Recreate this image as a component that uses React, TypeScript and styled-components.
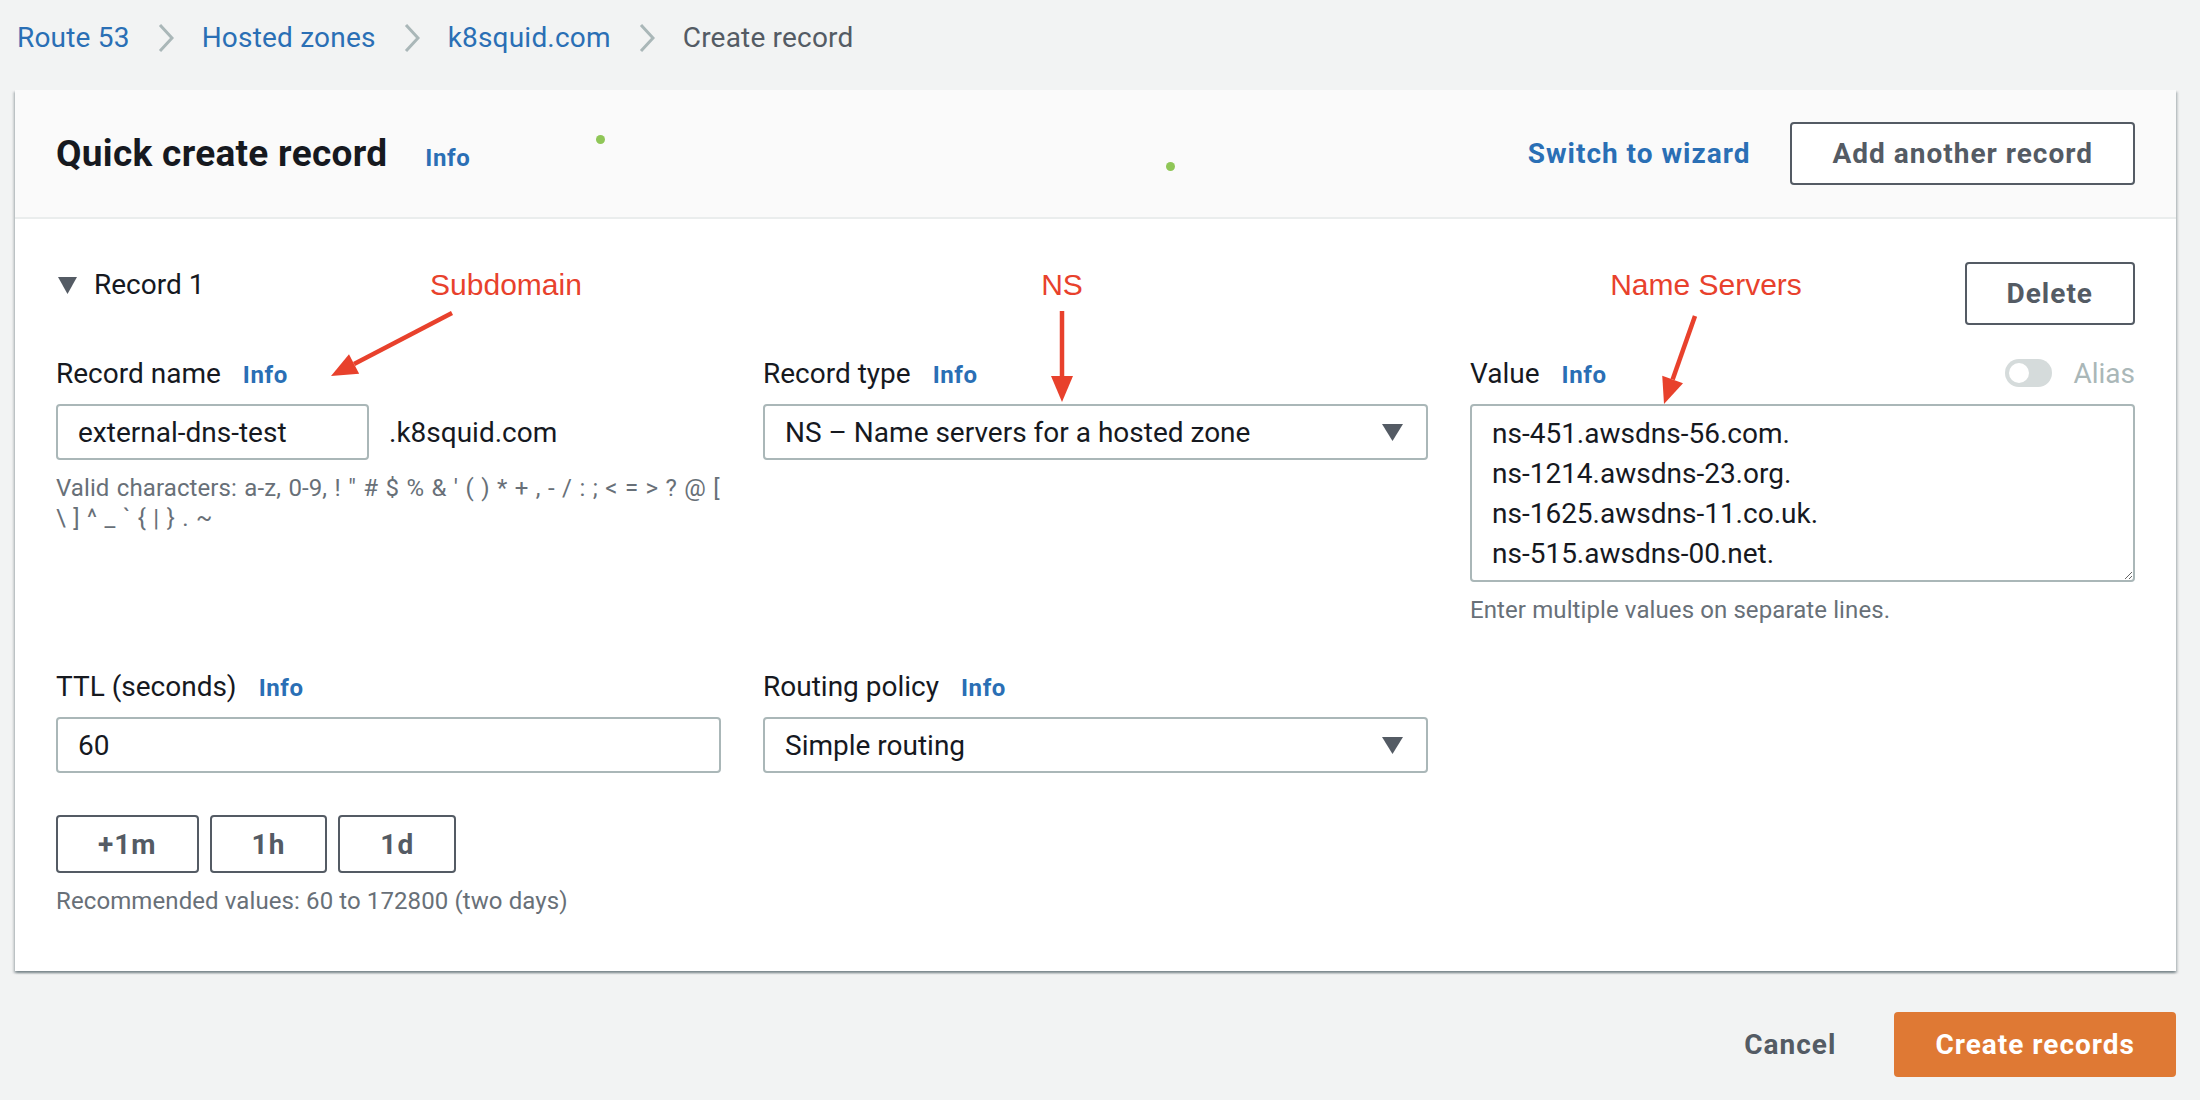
import React from "react";
import styled, { createGlobalStyle } from "styled-components";

const GlobalStyle = createGlobalStyle`
  html, body { margin: 0; padding: 0; }
  body {
    background: #f2f3f3;
    font-family: Roboto, "Noto Sans", Arial, sans-serif;
    color: #16191f;
  }
  * { box-sizing: border-box; }
`;

const BLUE = "#2a6fb5";
const GRAY = "#545b64";
const HINT = "#687078";
const RED = "#e8412c";

const Page = styled.div`
  padding: 0 24px 0 15px;
  width: 2200px;
`;

const Breadcrumbs = styled.nav`
  display: flex;
  align-items: center;
  gap: 28px;
  height: 40px;
  margin-top: 18px;
  margin-bottom: 32px;
  padding-left: 2px;
  font-size: 28px;
`;

const Crumb = styled.span<{ $current?: boolean }>`
  color: ${(p) => (p.$current ? GRAY : BLUE)};
  line-height: 40px;
  white-space: nowrap;
  letter-spacing: 0.2px;
`;

const Chevron = () => (
  <svg width="16" height="30" viewBox="0 0 16 30">
    <polyline points="2,2 14,15 2,28" fill="none" stroke="#aab7b8" strokeWidth="3" />
  </svg>
);

const Card = styled.section`
  position: relative;
  background: #fff;
  box-shadow: 0 2px 2px 0 rgba(0, 28, 36, 0.3), 2px 2px 2px 0 rgba(0, 28, 36, 0.15),
    -2px 2px 2px 0 rgba(0, 28, 36, 0.15);
`;

const CardHeader = styled.header`
  position: relative;
  display: flex;
  align-items: center;
  justify-content: space-between;
  height: 129px;
  padding: 0 41px;
  background: #fafafa;
  border-bottom: 2px solid #eaeded;
`;

const TitleGroup = styled.div`
  display: flex;
  align-items: baseline;
  gap: 38px;
`;

const Title = styled.h2`
  margin: 0;
  font-size: 37px;
  font-weight: 700;
  letter-spacing: 0.3px;
  color: #16191f;
`;

const InfoLink = styled.span`
  font-size: 24px;
  font-weight: 700;
  letter-spacing: 0.6px;
  color: ${BLUE};
`;

const HeaderActions = styled.div`
  display: flex;
  align-items: center;
  gap: 40px;
`;

const TextLink = styled.span<{ $tone?: "blue" | "gray" }>`
  font-size: 28px;
  font-weight: 700;
  letter-spacing: 1px;
  color: ${(p) => (p.$tone === "gray" ? GRAY : BLUE)};
  white-space: nowrap;
`;

const OutlineButton = styled.button<{ $h?: number }>`
  height: ${(p) => p.$h ?? 63}px;
  padding: 0 40px;
  border: 2px solid ${GRAY};
  border-radius: 4px;
  background: #fff;
  color: ${GRAY};
  font-family: inherit;
  font-size: 28px;
  font-weight: 700;
  letter-spacing: 1px;
  white-space: nowrap;
`;

const Dot = styled.span<{ $x: number; $y: number }>`
  position: absolute;
  left: ${(p) => p.$x}px;
  top: ${(p) => p.$y}px;
  width: 9px;
  height: 9px;
  border-radius: 50%;
  background: #8fc657;
`;

const CardBody = styled.div`
  padding: 43px 41px 55px;
`;

const RecordHeader = styled.div`
  display: flex;
  justify-content: space-between;
  align-items: flex-start;
  height: 63px;
`;

const RecordToggle = styled.div`
  display: flex;
  align-items: center;
  gap: 17px;
  margin-top: 5px;
  margin-left: 2px;
  font-size: 28px;
  line-height: 36px;
`;

const Grid = styled.div`
  display: grid;
  grid-template-columns: repeat(3, 1fr);
  column-gap: 42px;
  row-gap: 43px;
  margin-top: 30px;
`;

const Field = styled.div`
  display: flex;
  flex-direction: column;
`;

const LabelRow = styled.div`
  display: flex;
  align-items: center;
  justify-content: space-between;
  height: 36px;
  margin-bottom: 13px;
`;

const LabelGroup = styled.div`
  display: flex;
  align-items: baseline;
  gap: 22px;
`;

const Label = styled.span`
  font-size: 28px;
  color: #16191f;
`;

const InputRow = styled.div`
  display: flex;
  align-items: center;
  gap: 20px;
`;

const TextInput = styled.div<{ $w?: number }>`
  display: flex;
  align-items: center;
  width: ${(p) => (p.$w ? `${p.$w}px` : "100%")};
  height: 56px;
  padding: 0 20px;
  border: 2px solid #aab7b8;
  border-radius: 4px;
  background: #fff;
  font-size: 28px;
  color: #16191f;
  white-space: nowrap;
`;

const Suffix = styled.span`
  font-size: 28px;
  color: #16191f;
`;

const Hint = styled.div<{ $spread?: boolean }>`
  margin-top: 13px;
  font-size: 24px;
  line-height: 30px;
  color: ${HINT};
  word-spacing: ${(p) => (p.$spread ? "1.3px" : "0")};
  white-space: ${(p) => (p.$spread ? "nowrap" : "normal")};
  letter-spacing: 0.1px;
`;

const SelectBox = styled.div`
  display: flex;
  align-items: center;
  justify-content: space-between;
  height: 56px;
  padding: 0 23px 0 20px;
  border: 2px solid #aab7b8;
  border-radius: 4px;
  background: #fff;
  font-size: 28px;
  color: #16191f;
`;

const Caret = () => (
  <svg width="21" height="17" viewBox="0 0 21 17">
    <polygon points="0,0 21,0 10.5,17" fill={GRAY} />
  </svg>
);

const ValueArea = styled.textarea`
  display: block;
  width: 100%;
  height: 178px;
  padding: 8px 20px;
  border: 2px solid #aab7b8;
  border-radius: 4px;
  font-family: inherit;
  font-size: 28px;
  line-height: 40px;
  color: #16191f;
  resize: vertical;
  overflow: hidden;
  outline: none;
`;

const AliasGroup = styled.div`
  display: flex;
  align-items: center;
  gap: 21px;
`;

const Track = styled.span`
  position: relative;
  display: inline-block;
  width: 47px;
  height: 28px;
  border-radius: 14px;
  background: #d5dbdb;
`;

const Knob = styled.span`
  position: absolute;
  left: 4px;
  top: 4px;
  width: 20px;
  height: 20px;
  border-radius: 50%;
  background: #fff;
`;

const AliasText = styled.span`
  font-size: 28px;
  color: #aab7b8;
`;

const PresetRow = styled.div`
  display: flex;
  gap: 11px;
  margin-top: 42px;
`;

const Footer = styled.footer`
  display: flex;
  justify-content: flex-end;
  align-items: center;
  gap: 58px;
  margin-top: 41px;
`;

const PrimaryButton = styled.button`
  height: 65px;
  padding: 0 41px;
  border: none;
  border-radius: 4px;
  background: #df7934;
  color: #fff;
  font-family: inherit;
  font-size: 28px;
  font-weight: 700;
  letter-spacing: 1px;
`;

const Note = styled.span<{ $x: number; $y: number }>`
  position: absolute;
  left: ${(p) => p.$x}px;
  top: ${(p) => p.$y}px;
  transform: translateX(-50%);
  font-family: "Liberation Sans", Arial, sans-serif;
  font-size: 30px;
  line-height: 34px;
  color: ${RED};
  white-space: nowrap;
  pointer-events: none;
`;

const Overlay = styled.svg`
  position: absolute;
  left: 0;
  top: 0;
  pointer-events: none;
  overflow: visible;
`;

type Arrow = { x1: number; y1: number; x2: number; y2: number };

const arrowShapes = (a: Arrow) => {
  const dx = a.x2 - a.x1;
  const dy = a.y2 - a.y1;
  const len = Math.hypot(dx, dy);
  const ux = dx / len;
  const uy = dy / len;
  const headLen = 26;
  const headHalf = 11;
  const bx = a.x2 - ux * headLen;
  const by = a.y2 - uy * headLen;
  const px = -uy;
  const py = ux;
  const pts = `${a.x2},${a.y2} ${bx + px * headHalf},${by + py * headHalf} ${bx - px * headHalf},${by - py * headHalf}`;
  return { bx, by, pts };
};

const arrows: Arrow[] = [
  { x1: 437, y1: 223, x2: 316, y2: 286 },
  { x1: 1047, y1: 221, x2: 1047, y2: 312 },
  { x1: 1680, y1: 226, x2: 1649, y2: 314 },
];

export default function App() {
  return (
    <>
      <GlobalStyle />
      <Page>
        <Breadcrumbs>
          <Crumb>Route 53</Crumb>
          <Chevron />
          <Crumb>Hosted zones</Crumb>
          <Chevron />
          <Crumb>k8squid.com</Crumb>
          <Chevron />
          <Crumb $current>Create record</Crumb>
        </Breadcrumbs>

        <Card>
          <CardHeader>
            <TitleGroup>
              <Title>Quick create record</Title>
              <InfoLink>Info</InfoLink>
            </TitleGroup>
            <HeaderActions>
              <TextLink>Switch to wizard</TextLink>
              <OutlineButton>Add another record</OutlineButton>
            </HeaderActions>
            <Dot $x={581} $y={45} />
            <Dot $x={1151} $y={72} />
          </CardHeader>

          <CardBody>
            <RecordHeader>
              <RecordToggle>
                <svg width="19" height="17" viewBox="0 0 19 17">
                  <polygon points="0,0 19,0 9.5,17" fill={GRAY} />
                </svg>
                <span>Record 1</span>
              </RecordToggle>
              <OutlineButton>Delete</OutlineButton>
            </RecordHeader>

            <Grid>
              <Field>
                <LabelRow>
                  <LabelGroup>
                    <Label>Record name</Label>
                    <InfoLink>Info</InfoLink>
                  </LabelGroup>
                </LabelRow>
                <InputRow>
                  <TextInput $w={313}>external-dns-test</TextInput>
                  <Suffix>.k8squid.com</Suffix>
                </InputRow>
                <Hint $spread>
                  Valid characters: a-z, 0-9, ! " # $ % &amp; ' ( ) * + , - / : ; &lt; = &gt; ? @ [
                  <br />
                  \ ] ^ _ ` {"{"} | {"}"} . ~
                </Hint>
              </Field>

              <Field>
                <LabelRow>
                  <LabelGroup>
                    <Label>Record type</Label>
                    <InfoLink>Info</InfoLink>
                  </LabelGroup>
                </LabelRow>
                <SelectBox>
                  <span>NS – Name servers for a hosted zone</span>
                  <Caret />
                </SelectBox>
              </Field>

              <Field>
                <LabelRow>
                  <LabelGroup>
                    <Label>Value</Label>
                    <InfoLink>Info</InfoLink>
                  </LabelGroup>
                  <AliasGroup>
                    <Track>
                      <Knob />
                    </Track>
                    <AliasText>Alias</AliasText>
                  </AliasGroup>
                </LabelRow>
                <ValueArea
                  readOnly
                  defaultValue={"ns-451.awsdns-56.com.\nns-1214.awsdns-23.org.\nns-1625.awsdns-11.co.uk.\nns-515.awsdns-00.net."}
                />
                <Hint>Enter multiple values on separate lines.</Hint>
              </Field>

              <Field>
                <LabelRow>
                  <LabelGroup>
                    <Label>TTL (seconds)</Label>
                    <InfoLink>Info</InfoLink>
                  </LabelGroup>
                </LabelRow>
                <TextInput>60</TextInput>
                <PresetRow>
                  <OutlineButton $h={58}>+1m</OutlineButton>
                  <OutlineButton $h={58}>1h</OutlineButton>
                  <OutlineButton $h={58}>1d</OutlineButton>
                </PresetRow>
                <Hint>Recommended values: 60 to 172800 (two days)</Hint>
              </Field>

              <Field>
                <LabelRow>
                  <LabelGroup>
                    <Label>Routing policy</Label>
                    <InfoLink>Info</InfoLink>
                  </LabelGroup>
                </LabelRow>
                <SelectBox>
                  <span>Simple routing</span>
                  <Caret />
                </SelectBox>
              </Field>
            </Grid>
          </CardBody>

          <Note $x={491} $y={178}>Subdomain</Note>
          <Note $x={1047} $y={178}>NS</Note>
          <Note $x={1691} $y={178}>Name Servers</Note>
          <Overlay width="2161" height="879">
            {arrows.map((a, i) => {
              const s = arrowShapes(a);
              return (
                <g key={i}>
                  <line x1={a.x1} y1={a.y1} x2={s.bx} y2={s.by} stroke={RED} strokeWidth="4.5" />
                  <polygon points={s.pts} fill={RED} />
                </g>
              );
            })}
          </Overlay>
        </Card>

        <Footer>
          <TextLink $tone="gray">Cancel</TextLink>
          <PrimaryButton>Create records</PrimaryButton>
        </Footer>
      </Page>
    </>
  );
}
